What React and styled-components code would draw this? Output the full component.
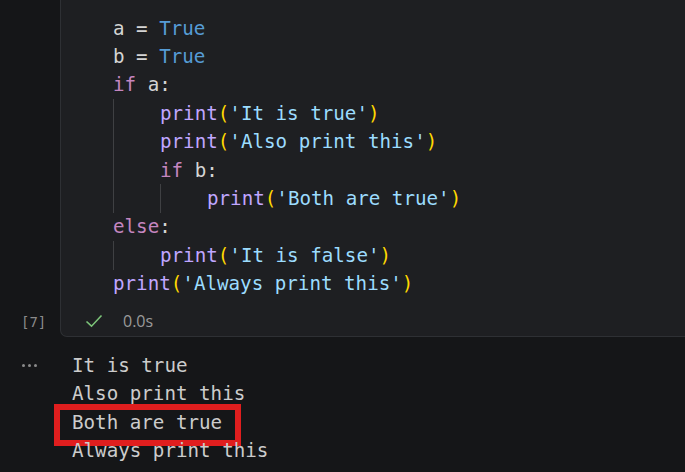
import React from "react";
import styled, { createGlobalStyle } from "styled-components";

const Global = createGlobalStyle`
  html, body { margin: 0; padding: 0; }
  body {
    background: #151618;
    width: 685px;
    height: 472px;
    overflow: hidden;
    font-family: "DejaVu Sans Mono", monospace;
  }
`;

const C = {
  text: "#d4d4d4",
  bool: "#569cd6",
  kw: "#c586c0",
  fn: "#c0a6ff",
  paren: "#ffd700",
  str: "#9cdcfe",
};

const Page = styled.div`
  display: flex;
  flex-direction: column;
  width: 685px;
  height: 472px;
`;

const CellBlock = styled.div`
  display: grid;
  grid-template-columns: 60px 1fr;
`;

const Gutter = styled.div`
  display: flex;
  flex-direction: column;
  justify-content: ${(p) => (p.$top ? "flex-start" : "flex-end")};
`;

const ExecCount = styled.div`
  height: 30px;
  display: flex;
  align-items: center;
  padding-left: 21px;
  font-family: "DejaVu Sans Mono", monospace;
  font-size: 14px;
  color: #8a8a8a;
`;

const Cell = styled.div`
  background: #1e1f22;
  border-left: 1px solid #2e3034;
  border-bottom: 1px solid #2e3034;
  border-bottom-left-radius: 7px;
  padding-top: 14px;
`;

const Code = styled.div`
  padding-left: 52px;
  font-family: "DejaVu Sans Mono", monospace;
  font-size: 19.2px;
  color: ${C.text};
`;

const Line = styled.div`
  display: flex;
  height: 28.4px;
  align-items: center;
  white-space: pre;
`;

const Indent = styled.span`
  align-self: stretch;
  width: 46px;
  flex: none;
  border-left: 1px solid #3f4043;
`;

const Tok = styled.span`
  color: ${(p) => p.$c || C.text};
`;

const Status = styled.div`
  height: 30px;
  margin-top: 8px;
  display: flex;
  align-items: center;
  padding-left: 24px;
  gap: 20px;
  font-family: "Open Sans", "Noto Sans", sans-serif;
  font-size: 16px;
  color: #9a9a9a;
`;

const Output = styled.div`
  display: grid;
  grid-template-columns: 60px 1fr;
  margin-top: 14px;
`;

const More = styled.div`
  height: 28.5px;
  display: flex;
  align-items: center;
  padding-left: 22px;
  gap: 3px;
`;

const Dot = styled.span`
  width: 3px;
  height: 3px;
  border-radius: 50%;
  background: #8a8a8a;
`;

const OutText = styled.div`
  padding-left: 12px;
  font-family: "DejaVu Sans Mono", monospace;
  font-size: 19.2px;
  color: #cccccc;
`;

const OutLine = styled.div`
  height: 28.5px;
  display: flex;
  align-items: center;
  white-space: pre;
  position: relative;
  ${(p) =>
    p.$marked &&
    `
    &::after {
      content: "";
      position: absolute;
      left: -18px;
      top: -4px;
      width: 187px;
      height: 42px;
      box-sizing: border-box;
      border: 6px solid #e01e1e;
    }
  `}
`;

const P = ({ s }) => (
  <>
    <Tok $c={C.fn}>print</Tok>
    <Tok $c={C.paren}>(</Tok>
    <Tok $c={C.str}>'{s}'</Tok>
    <Tok $c={C.paren}>)</Tok>
  </>
);

const Ind = ({ n }) =>
  Array.from({ length: n }).map((_, i) => <Indent key={i} />);

const Check = () => (
  <svg width="18" height="14" viewBox="0 0 18 14" fill="none">
    <path d="M1.5 7.5 L6.5 12.2 L16.5 1.5" stroke="#7cc379" strokeWidth="1.6" />
  </svg>
);

export default function App() {
  return (
    <Page>
      <Global />
      <CellBlock>
        <Gutter>
          <ExecCount>[7]</ExecCount>
        </Gutter>
        <Cell>
          <Code>
            <Line>
              <Tok>a = </Tok>
              <Tok $c={C.bool}>True</Tok>
            </Line>
            <Line>
              <Tok>b = </Tok>
              <Tok $c={C.bool}>True</Tok>
            </Line>
            <Line>
              <Tok $c={C.kw}>if</Tok>
              <Tok> a:</Tok>
            </Line>
            <Line>
              <Ind n={1} />
              <P s="It is true" />
            </Line>
            <Line>
              <Ind n={1} />
              <P s="Also print this" />
            </Line>
            <Line>
              <Ind n={1} />
              <Tok $c={C.kw}>if</Tok>
              <Tok> b:</Tok>
            </Line>
            <Line>
              <Ind n={2} />
              <P s="Both are true" />
            </Line>
            <Line>
              <Tok $c={C.kw}>else</Tok>
              <Tok>:</Tok>
            </Line>
            <Line>
              <Ind n={1} />
              <P s="It is false" />
            </Line>
            <Line>
              <P s="Always print this" />
            </Line>
          </Code>
          <Status>
            <Check />
            <span>0.0s</span>
          </Status>
        </Cell>
      </CellBlock>
      <Output>
        <Gutter $top>
          <More>
            <Dot />
            <Dot />
            <Dot />
          </More>
        </Gutter>
        <OutText>
          <OutLine>It is true</OutLine>
          <OutLine>Also print this</OutLine>
          <OutLine $marked>Both are true</OutLine>
          <OutLine>Always print this</OutLine>
        </OutText>
      </Output>
    </Page>
  );
}
